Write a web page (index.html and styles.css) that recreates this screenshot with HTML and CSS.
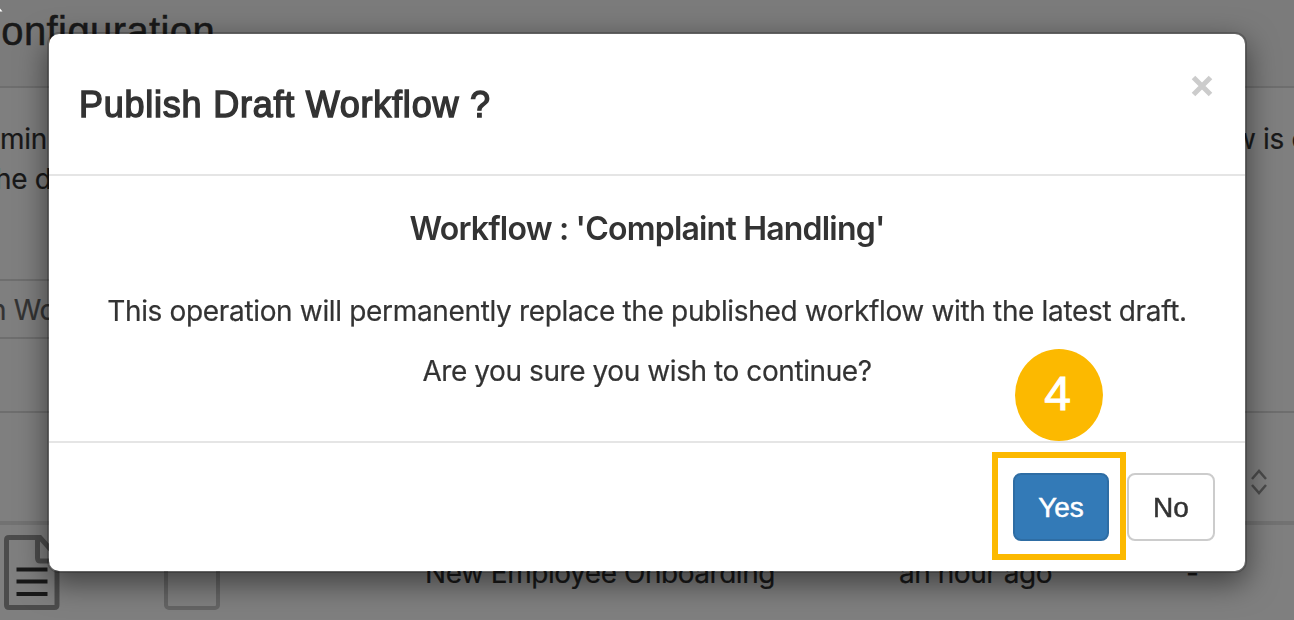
FILE: index.html
```html
<!DOCTYPE html>
<html lang="en">
<head>
  <meta charset="UTF-8">
  <meta name="viewport" content="width=device-width, initial-scale=1.0">
  <title>Workflow Configuration</title>
  <link rel="stylesheet" href="styles.css">
</head>
<body>
  <div class="page">
    <header class="page-header">
      <h1>Configuration</h1>
    </header>
    <section class="intro">
      <div class="intro-line"><span class="intro-start">min</span><span class="intro-end">w is c</span></div>
      <div class="intro-line intro-second">he d</div>
    </section>
    <div class="search"><span>n Wo</span></div>
    <div class="table-head">
      <svg class="sort" width="20" height="28" viewBox="0 0 20 28"><path d="M3 11l7-8 7 8M3 17l7 8 7-8"/></svg>
    </div>
    <div class="table-row">
      <svg class="doc" width="56" height="76" viewBox="0 0 56 76">
        <path class="doc-outline" d="M5 2.5h31l17 19V70q0 2.500-2.500 2.500h-45.500q-2.500 0-2.500-2.500V5q0-2.500 2.500-2.500zM33.500 3v20q0 3 3 3H53"/>
        <path class="doc-lines" d="M12.500 34.500h31M12.500 46.500h31M12.500 59h31"/>
      </svg>
      <span class="check"></span>
      <span class="cell-name">New Employee Onboarding</span>
      <span class="cell-time">an hour ago</span>
      <span class="cell-dash">-</span>
    </div>
  </div>

  <div class="backdrop"></div>
  <svg class="pointer" width="4" height="12" viewBox="0 0 4 12"><path d="M0 8.500L2.500 11.500H0z"/></svg>

  <div class="modal">
    <div class="modal-header">
      <h2>Publish Draft Workflow ?</h2>
      <button class="close" aria-label="Close">
        <svg width="22" height="22" viewBox="0 0 22 22"><path d="M2.500 2.500l17 17M19.500 2.500l-17 17"/></svg>
      </button>
    </div>
    <div class="modal-body">
      <h3>Workflow : 'Complaint Handling'</h3>
      <p class="message">This operation will permanently replace the published workflow with the latest draft.</p>
      <p class="question">Are you sure you wish to continue?</p>
    </div>
    <div class="modal-footer">
      <div class="confirm">
        <button class="btn btn-primary">Yes</button>
        <span class="highlight"></span>
        <span class="step">4</span>
      </div>
      <button class="btn">No</button>
    </div>
  </div>
</body>
</html>
```
FILE: styles.css
```css
* {
  box-sizing: border-box;
}

body {
  margin: 0;
  height: 620px;
  overflow: hidden;
  font-family: Inter, "Liberation Sans", sans-serif;
  font-size: 28px;
  line-height: 40px;
  letter-spacing: -0.34px;
  color: #333;
  background: #fff;
  -webkit-text-stroke: 0.2px;
}

h1, h2, h3, p {
  margin: 0;
}

.page {
  height: 620px;
  overflow: hidden;
  white-space: nowrap;
}

.page-header {
  height: 88px;
  padding-top: 8px;
  background: #f7f7f7;
  border-bottom: 2px solid #dcdcdc;
}

.page-header h1 {
  margin-left: -28px;
  font-family: "Liberation Sans", sans-serif;
  font-size: 40px;
  font-weight: 400;
  line-height: 46px;
  letter-spacing: 0.4px;
  -webkit-text-stroke: 0.5px #333;
}

.intro {
  height: 191px;
  padding-top: 31px;
}

.intro-line {
  display: flex;
  justify-content: space-between;
}

.intro-end {
  width: 61px;
}

.intro-second {
  margin-left: -5px;
}

.search {
  height: 60px;
  width: 1200px;
  padding-top: 9px;
  border: solid #dcdcdc;
  border-width: 2px 0;
  color: #666;
}

.search span {
  margin-left: -10px;
}

.table-head {
  display: flex;
  justify-content: flex-end;
  height: 114px;
  margin-top: 72px;
  padding: 55px 25px 0 0;
  border-top: 2px solid #dcdcdc;
  border-bottom: 4px solid #e4e4e4;
}

.sort {
  fill: none;
  stroke: #999;
  stroke-width: 2.5;
}

.table-row {
  display: flex;
  padding: 10px 0 0 4px;
  letter-spacing: -0.46px;
}

.doc {
  flex: none;
  fill: none;
}

.doc-outline {
  stroke: #999;
  stroke-width: 5;
}

.doc-lines {
  stroke: #333;
  stroke-width: 4;
}

.check {
  flex: none;
  width: 56px;
  height: 75px;
  margin-left: 104px;
  border: 4px solid #c8c8c8;
  border-radius: 5px;
}

.cell-name {
  width: 474px;
  margin: 18px 0 0 205px;
}

.cell-time {
  width: 287px;
  margin-top: 18px;
}

.cell-dash {
  margin-top: 18px;
}

.backdrop {
  position: fixed;
  inset: 0;
  background: rgba(0, 0, 0, 0.5);
}

.pointer {
  position: absolute;
  left: 0;
  top: 0;
  fill: #fff;
}

.modal {
  position: absolute;
  left: 47px;
  top: 32px;
  width: 1200px;
  height: 541px;
  background: #fff;
  background-clip: padding-box;
  border: 2px solid rgba(0, 0, 0, 0.2);
  border-radius: 12px;
  box-shadow: 0 10px 30px rgba(0, 0, 0, 0.5);
}

.modal-header {
  display: flex;
  justify-content: space-between;
  height: 142px;
  padding: 30px;
  border-bottom: 2px solid #e5e5e5;
}

.modal-header h2 {
  padding-top: 21px;
  font-family: "Liberation Sans", sans-serif;
  font-size: 36px;
  font-weight: 400;
  letter-spacing: 0.76px;
  -webkit-text-stroke: 1.4px #333;
}

.close {
  height: 22px;
  margin: 11px 2px 0 0;
  padding: 0;
  border: 0;
  background: none;
}

.close svg {
  display: block;
  stroke: #ccc;
  stroke-width: 5;
}

.modal-body {
  height: 265px;
  padding-top: 33px;
  text-align: center;
  white-space: nowrap;
}

.modal-body h3 {
  font-size: 32px;
  font-weight: 600;
  letter-spacing: -0.8px;
  -webkit-text-stroke: 0;
}

.message {
  margin-top: 42px;
}

.question {
  margin-top: 20px;
  letter-spacing: -0.42px;
}

.modal-footer {
  display: flex;
  justify-content: flex-end;
  gap: 18px;
  padding: 30px;
  border-top: 2px solid #e5e5e5;
}

.confirm {
  position: relative;
}

.btn {
  display: block;
  width: 88px;
  height: 68px;
  padding: 2px 0 0;
  border: 2px solid #ccc;
  border-radius: 8px;
  background: #fff;
  color: #333;
  font-family: "Liberation Sans", sans-serif;
  font-size: 28px;
  letter-spacing: 0;
  -webkit-text-stroke: 0.5px;
}

.btn-primary {
  width: 96px;
  color: #fff;
  background: #337ab7;
  border-color: #2e6da4;
}

.highlight {
  position: absolute;
  inset: -21px -17px -19px -21px;
  border: 6px solid #fcb900;
  pointer-events: none;
}

.step {
  position: absolute;
  left: 2px;
  top: -124px;
  width: 88px;
  height: 92px;
  padding-right: 3px;
  border-radius: 50%;
  background: #fcb900;
  color: #fff;
  font-family: "Liberation Sans", sans-serif;
  font-size: 48px;
  line-height: 90px;
  letter-spacing: 0;
  text-align: center;
  -webkit-text-stroke: 1px #fff;
}
```
